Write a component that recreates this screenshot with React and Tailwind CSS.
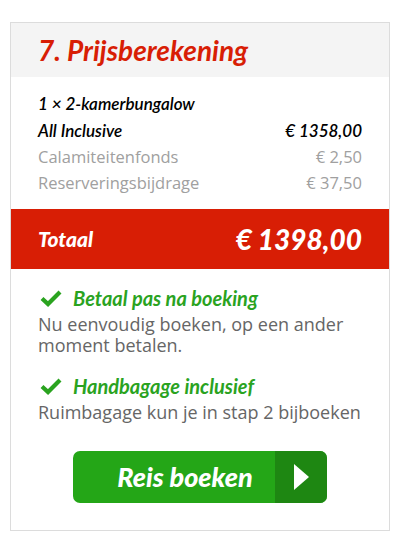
import React from 'react';

const heading = { fontFamily: 'Lato, "Open Sans", sans-serif' };
const body = { fontFamily: '"Open Sans", "Liberation Sans", sans-serif' };

const Check = () => (
  <svg width="22" height="18" viewBox="0 0 22 18" className="shrink-0">
    <path d="M2 9.5 L8 15 L20 3" fill="none" stroke="#2aa31f" strokeWidth="4.2" strokeLinecap="butt" strokeLinejoin="miter" />
  </svg>
);

const Usp = ({ title, text }) => (
  <div>
    <div className="flex items-center gap-[11px] h-[26px] pl-[2px]">
      <Check />
      <span className="text-[20px] font-bold italic text-[#2aa31f]" style={heading}>{title}</span>
    </div>
    <p className="mt-[3px] text-[18px] leading-[21px] text-[#666]" style={body}>{text}</p>
  </div>
);

export default function App() {
  return (
    <div className="bg-white w-[411px] h-[547px] pt-[22px] pl-[10px]">
      <div className="w-[380px] h-[509px] border border-[#dcdcdc] bg-white flex flex-col">
        <div className="bg-[#f4f4f4] h-[54px] pl-[27px] flex items-center">
          <h2 className="text-[28px] font-bold italic text-[#d81e05]" style={heading}>7. Prijsberekening</h2>
        </div>

        <div className="px-[27px] pt-[13px] pb-[13px]">
          <div className="h-[27px] flex items-center italic font-semibold text-black text-[17px]" style={heading}>1 × 2-kamerbungalow</div>
          <div className="h-[27px] flex items-center justify-between italic font-semibold text-black text-[17px]" style={heading}>
            <span>All Inclusive</span>
            <span>€ 1358,00</span>
          </div>
          <div className="h-[26px] flex items-center justify-between text-[#a0a0a0] text-[16.5px]" style={body}>
            <span>Calamiteitenfonds</span>
            <span>€ 2,50</span>
          </div>
          <div className="h-[26px] flex items-center justify-between text-[#a0a0a0] text-[16.5px]" style={body}>
            <span>Reserveringsbijdrage</span>
            <span>€ 37,50</span>
          </div>
        </div>

        <div className="bg-[#d81e05] h-[60px] px-[27px] flex items-center justify-between text-white italic font-black" style={heading}>
          <span className="text-[21px]">Totaal</span>
          <span className="text-[28px]">€ 1398,00</span>
        </div>

        <div className="px-[27px] pt-[16px] flex flex-col gap-[17px]">
          <Usp title="Betaal pas na boeking" text="Nu eenvoudig boeken, op een ander moment betalen." />
          <Usp title="Handbagage inclusief" text="Ruimbagage kun je in stap 2 bijboeken" />
        </div>

        <div className="flex justify-center pt-[28px]">
          <button type="button" className="w-[254px] h-[52px] rounded-[7px] overflow-hidden flex bg-[#24a617]">
            <span className="flex-1 flex items-center justify-center pl-[22px] text-white text-[27px] font-black italic" style={heading}>Reis boeken</span>
            <span className="w-[52px] h-full bg-[#1e8712] flex items-center justify-center">
              <svg width="15" height="26" viewBox="0 0 15 26">
                <path d="M0 0 L15 13 L0 26 Z" fill="#fff" />
              </svg>
            </span>
          </button>
        </div>
      </div>
    </div>
  );
}
